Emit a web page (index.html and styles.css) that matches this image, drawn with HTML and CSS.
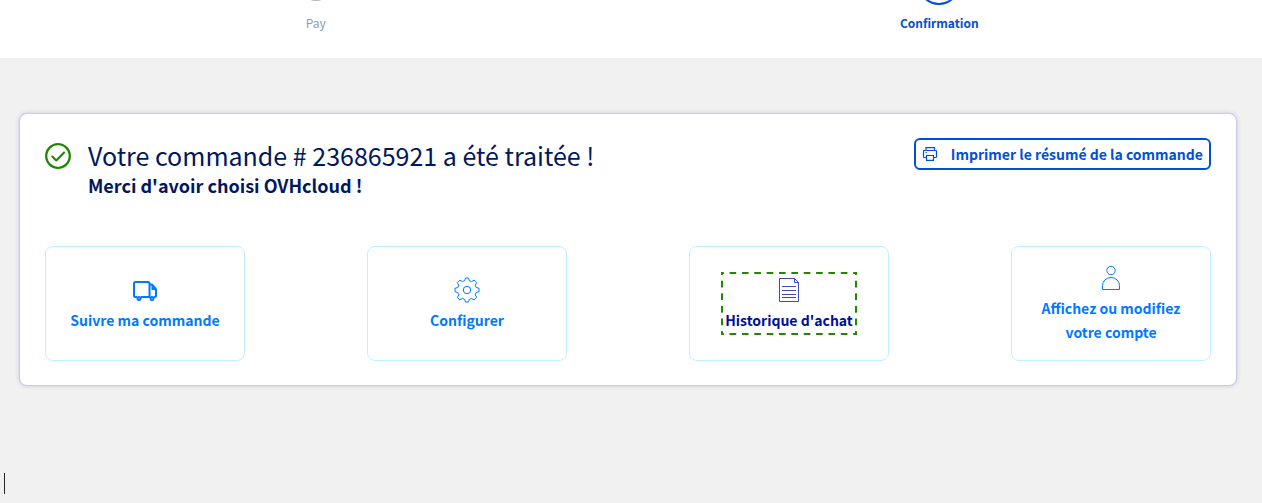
FILE: index.html
```
<!DOCTYPE html>
<html lang="fr">
<head>
    <meta charset="UTF-8">
    <meta name="viewport" content="width=device-width, initial-scale=1.0">
    <title>Confirmation de commande</title>
    <link rel="stylesheet" href="styles.css">
</head>
<body>
    <header class="steps">
        <div class="step">
            <span class="step-circle"></span>
            <span class="step-label">Pay</span>
        </div>
        <div class="step active">
            <span class="step-circle"></span>
            <span class="step-label">Confirmation</span>
        </div>
    </header>

    <main class="card">
        <div class="card-top">
            <svg class="check" viewBox="0 0 26 26" fill="none" stroke="currentColor" stroke-width="2.3">
                <circle cx="13" cy="13" r="11.8"/>
                <path d="M7.300 13.500l4 4 7.800-8" stroke-width="2" stroke-linecap="round" stroke-linejoin="round"/>
            </svg>
            <div class="message">
                <h1>Votre commande # 236865921 a été traitée !</h1>
                <p>Merci d'avoir choisi OVHcloud !</p>
            </div>
            <button type="button" class="print">
                <svg viewBox="0 0 16 16" fill="none" stroke="currentColor" stroke-width="1.2">
                    <path d="M4 4.500V1.700h8.500v2.800M4 11.500H2.200q-.7 0-.7-.7V5.200q0-.7.7-.7h11.600q.7 0 .7.700v5.600q0 .7-.7.700H12"/>
                    <path d="M4.500 9.500h7v4.800h-7z"/>
                    <path d="M3.600 6.600h1.200"/>
                </svg>
                Imprimer le résumé de la commande
            </button>
        </div>

        <nav class="tiles">
            <div class="tile">
                <a href="#">
                    <svg viewBox="0 0 26 26" fill="none" stroke="currentColor" stroke-width="2">
                        <path d="M5 20H3.500A1.500 1.500 0 0 1 2 18.500V6.500A1.500 1.500 0 0 1 3.500 5h12.500A1.500 1.500 0 0 1 17.500 6.500V20M9 20h9M17.500 7.500h1.700q1 0 1.600.8l2.600 3.200q.6.7.6 1.500V18.500q0 1.500-1.500 1.500H22"/>
                        <path d="M24 12h-3.500V8"/>
                        <circle cx="7" cy="21.500" r="1.500"/>
                        <circle cx="20" cy="21.500" r="1.500"/>
                    </svg>
                    Suivre ma commande
                </a>
            </div>
            <div class="tile">
                <a href="#">
                    <svg viewBox="0 0 26 26" fill="none" stroke="currentColor" stroke-width="1">
                        <path d="M11.500 1h3l.8 2.600 2.300 1 2.600-1.500 2.500 2.500-1.500 2.600 1 2.300 2.800.8v3.400l-2.800.8-1 2.300 1.500 2.600-2.500 2.500-2.600-1.500-2.300 1-.8 2.600h-3l-.8-2.600-2.300-1-2.600 1.500-2.500-2.500 1.500-2.600-1-2.300-2.800-.8v-3.400l2.800-.8 1-2.300-1.500-2.600 2.500-2.500 2.600 1.500 2.300-1z" stroke-linejoin="round"/>
                        <circle cx="13" cy="13" r="3.700"/>
                    </svg>
                    Configurer
                </a>
            </div>
            <div class="tile">
                <a href="#" class="focused">
                    <svg viewBox="0 0 26 26" fill="none" stroke="currentColor" stroke-width="1">
                        <path d="M3.500 1.500h15l4 4v19h-19zM18.500 1.500v4h4M6 9.500h14M6 13.500h14M6 17.500h14M6 20.500h14"/>
                    </svg>
                    Historique d'achat
                </a>
            </div>
            <div class="tile">
                <a href="#">
                    <svg viewBox="0 0 26 26" fill="none" stroke="currentColor" stroke-width="1">
                        <circle cx="13" cy="5.500" r="4.200"/>
                        <path d="M4.500 24.500V20.500a8.500 8 0 0 1 17 0v4z"/>
                    </svg>
                    Affichez ou modifiez votre compte
                </a>
            </div>
        </nav>
    </main>

    <div class="caret"></div>
</body>
</html>
```

FILE: styles.css
```
* {
    box-sizing: border-box;
}
body {
    margin: 0;
    background-color: #f1f1f1;
    font-family: "Noto Sans CJK SC", "Open Sans", sans-serif;
    font-size: 14px;
    color: #00185e;
    overflow: hidden;
}
.steps {
    display: flex;
    align-items: flex-end;
    height: 58px;
    padding: 0 11px 25px 4px;
    background-color: #fff;
    overflow: hidden;
}
.step {
    flex: 1;
    display: flex;
    flex-direction: column;
    align-items: center;
    color: #8c9bc0;
}
.step-circle {
    width: 32px;
    height: 32px;
    margin-bottom: 11px;
    border: 2px solid #b3b3b3;
    border-radius: 50%;
}
.step-label {
    font-size: 12px;
    line-height: 21px;
}
.step.active {
    color: #0050d7;
    font-weight: bold;
}
.active .step-circle {
    width: 42px;
    height: 42px;
    margin-bottom: 7px;
    border-color: #0050d7;
}
.card {
    margin: 55px 25px 0 19px;
    padding: 24px 25px;
    background-color: #fff;
    border: 1px solid #c8cae6;
    border-radius: 8px;
    box-shadow: 0 0 4px #c5c6e4;
}
.card-top {
    display: flex;
    align-items: flex-start;
}
.check {
    width: 26px;
    height: 26px;
    margin-top: 5px;
    color: #228800;
}
.message {
    flex: 1;
    margin-left: 17px;
}
h1, p {
    margin: 0;
}
h1 {
    font-size: 25px;
    font-weight: normal;
    line-height: 34px;
}
.message p {
    font-size: 18px;
    font-weight: bold;
    line-height: 26px;
}
.print {
    display: flex;
    align-items: center;
    gap: 13px;
    height: 32px;
    padding: 0 6px;
    border: 2px solid #0050d7;
    border-radius: 6px;
    background-color: #fff;
    color: #0050d7;
    font-family: inherit;
    font-size: 14px;
    font-weight: bold;
}
.print svg {
    width: 16px;
    height: 16px;
}
.tiles {
    display: flex;
    justify-content: space-between;
    margin-top: 48px;
}
.tile {
    display: flex;
    align-items: center;
    justify-content: center;
    width: 200px;
    height: 115px;
    padding: 0 20px;
    border: 1px solid #bef1ff;
    border-radius: 8px;
}
.tile a {
    position: relative;
    display: flex;
    flex-direction: column;
    align-items: center;
    padding: 3px 2px 1px;
    color: #0078ff;
    font-weight: bold;
    line-height: 24px;
    text-align: center;
    text-decoration: none;
}
.tile svg {
    width: 26px;
    height: 26px;
    margin-bottom: 5px;
}
.tile .focused {
    color: #000e9c;
    outline: none;
}
.focused svg {
    opacity: 0.75;
}
/* dashed focus ring, wider gaps than outline gives */
.focused::after {
    content: "";
    position: absolute;
    inset: -2px;
    --dash-x: linear-gradient(90deg, #228800 3px, transparent 3px 9px, #228800 9px);
    --dash-y: linear-gradient(#228800 3px, transparent 3px 9px, #228800 9px);
    background:
        var(--dash-x) 0 0 / 12px 2px round no-repeat,
        var(--dash-x) 0 100% / 12px 2px round no-repeat,
        var(--dash-y) 0 0 / 2px 12px no-repeat round,
        var(--dash-y) 100% 0 / 2px 12px no-repeat round;
}
.caret {
    width: 1px;
    height: 21px;
    margin: 87px 0 0 4px;
    background-color: #212529;
}
```
